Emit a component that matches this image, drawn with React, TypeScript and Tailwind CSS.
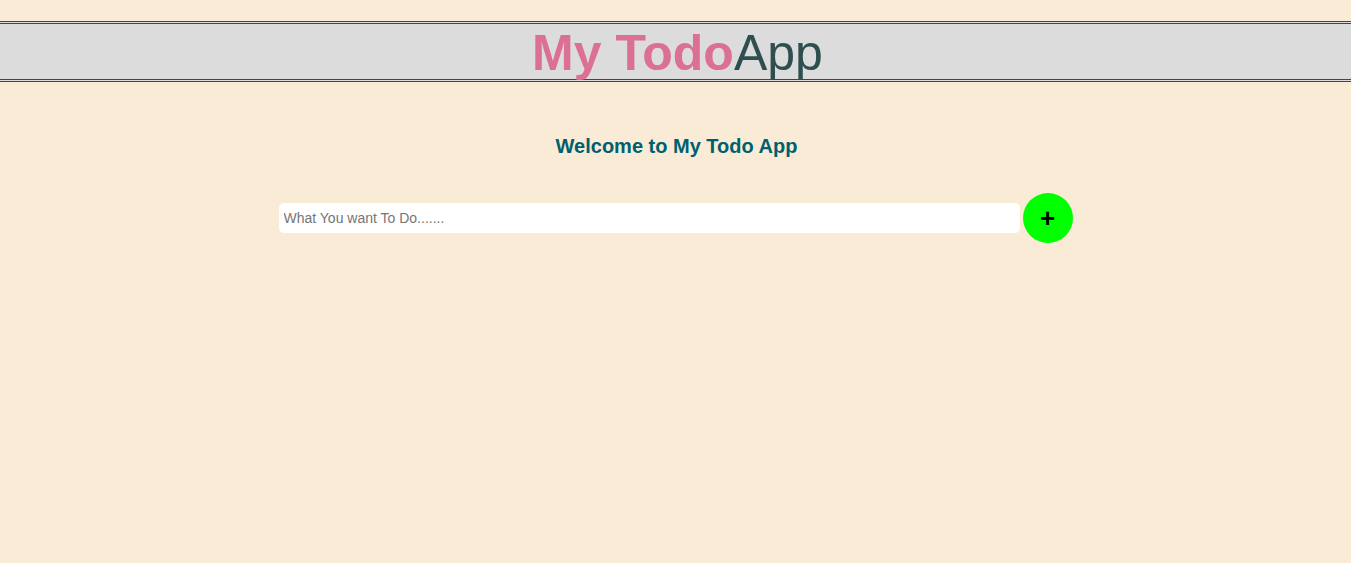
export default function App() {
  return (
    <div className="min-h-[563px] bg-[#faebd7] pt-[21px] font-['Liberation_Sans',Arial,sans-serif]">
      <header className="border-y-[3px] border-double border-[#2f4f4f] bg-[#dcdcdc]">
        <h1 className="h-[55px] pl-[4px] pt-[2px] text-center text-[50px] leading-[55px]">
          <span className="font-bold text-[#db7093]">My Todo</span>
          <span className="text-[#2f4f4f]">App</span>
        </h1>
      </header>

      <main className="flex flex-col items-center">
        <h2 className="ml-[2px] mt-[51px] text-[20px] font-bold leading-[26px] text-[#005f6e]">
          Welcome to My Todo App
        </h2>

        <div className="mt-[34px] flex items-center gap-[3px]">
          <input
            type="text"
            placeholder="What You want To Do......."
            className="h-[30px] w-[741px] rounded-[5px] bg-white px-[5px] text-[14px] text-black outline-none placeholder:text-[#757575]"
          />
          <button className="flex h-[50px] w-[50px] items-center justify-center rounded-full bg-[#00ff00] text-[26px] font-bold leading-none text-black">
            +
          </button>
        </div>
      </main>
    </div>
  );
}
